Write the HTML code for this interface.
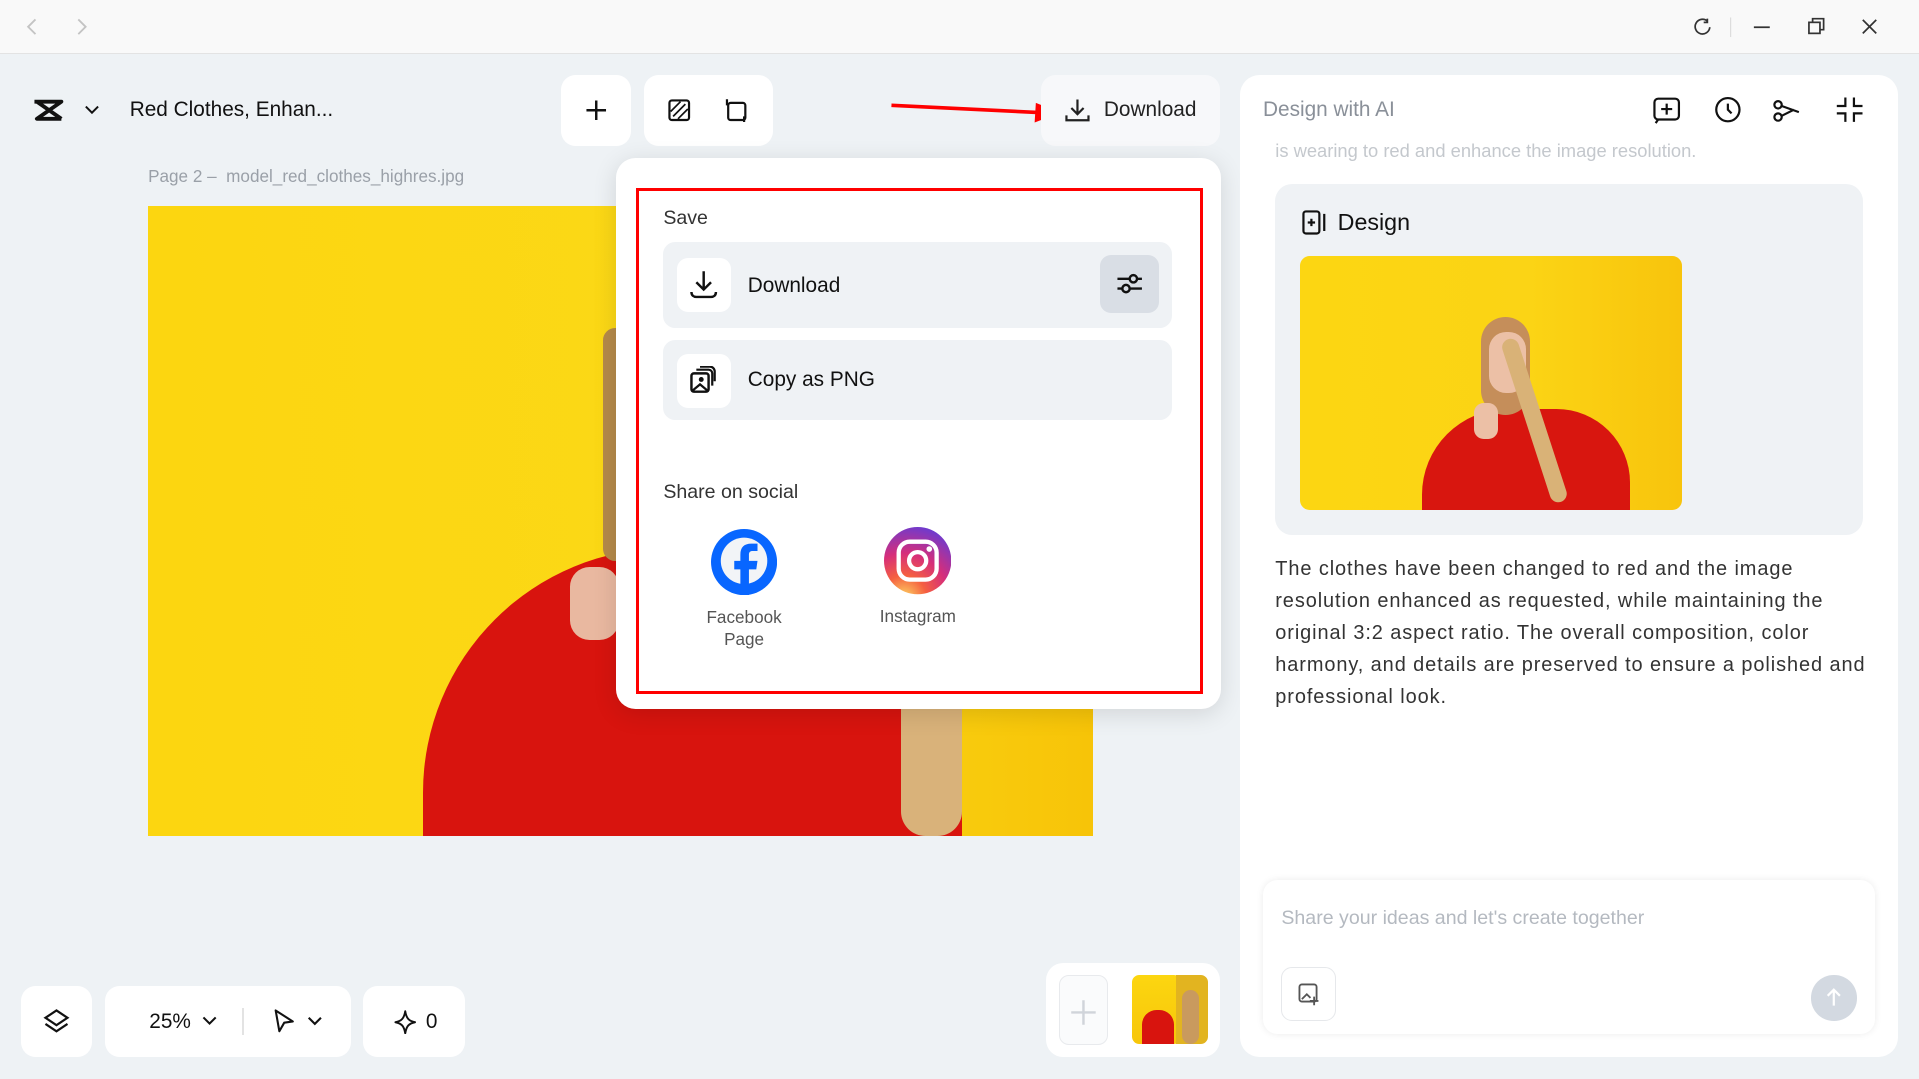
<!DOCTYPE html>
<html><head><meta charset="utf-8"><style>
*{box-sizing:border-box;margin:0;padding:0}
html,body{width:1919px;height:1079px;overflow:hidden;background:#eef2f5;font-family:"Liberation Sans",sans-serif}
#w{position:absolute;left:0;top:0;width:1568px;height:882px;zoom:1.22385;background:#eef2f5}
.a{position:absolute}
.card{position:absolute;background:#fff;border-radius:12px}
svg{display:block}
</style></head><body><div id="w">
<div class="a" style="left:0;top:0;width:1568px;height:44px;background:#f9f9f9;border-bottom:1px solid #e3e3e3"></div>
<svg class="a" style="left:18px;top:14px" width="60" height="16"><path d="M11 2L5 8l6 6M46 2l6 6-6 6" stroke="#c4c4c4" stroke-width="1.5" fill="none"/></svg>
<svg class="a" style="left:1380px;top:12px" width="160" height="20"><path d="M15 5a6 6 0 1 0 2 5M15 3v3h-3" stroke="#333" stroke-width="1.4" fill="none"/><path d="M34 2v16" stroke="#ddd"/><path d="M53 10h13" stroke="#333" stroke-width="1.4"/><rect x="98" y="6" width="9" height="9" stroke="#333" stroke-width="1.4" fill="none"/><path d="M101 6V3h9v9h-3" stroke="#333" stroke-width="1.4" fill="none"/><path d="M142 4l11 11M153 4l-11 11" stroke="#333" stroke-width="1.4"/></svg>

<div class="card" style="left:12px;top:62px;width:276px;height:58px;background:#eef2f5"></div>
<svg class="a" style="left:26px;top:80px" width="64" height="20"><path d="M2 3h22L4 17h20M4 3l20 14" stroke="#111" stroke-width="3.2" fill="none" stroke-linejoin="round"/><path d="M44 7l5 5 5-5" stroke="#111" stroke-width="1.6" fill="none"/></svg>
<div class="a" style="left:106px;top:80px;font-size:17px;color:#111">Red Clothes, Enhan...</div>
<div class="card" style="left:458px;top:61px;width:58px;height:58px"></div>
<svg class="a" style="left:477px;top:80px" width="20" height="20"><path d="M10 2v16M2 10h16" stroke="#111" stroke-width="2"/></svg>
<div class="card" style="left:526px;top:61px;width:106px;height:58px"></div>
<svg class="a" style="left:545px;top:80px" width="70" height="20"><rect x="2" y="2" width="16" height="16" rx="2" stroke="#111" stroke-width="1.8" fill="none"/><path d="M5 15L15 5M9 17l8-8M3 11l8-8" stroke="#111" stroke-width="1.4"/><rect x="50" y="4" width="14" height="14" rx="2" stroke="#111" stroke-width="1.8" fill="none"/><path d="M49 1v5M63 15v5" stroke="#111" stroke-width="1.8"/></svg>
<svg class="a" style="left:726px;top:80px" width="145" height="22"><path d="M2 6L125 12" stroke="#f00" stroke-width="3"/><path d="M120 4l20 8-21 8z" fill="#f00"/></svg>
<div class="card" style="left:851px;top:61px;width:146px;height:58px;background:#f7f8fa"></div>
<svg class="a" style="left:869px;top:79px" width="22" height="22"><path d="M11 2v12M6 9l5 5 5-5M2 15v4h18v-4" stroke="#222" stroke-width="1.8" fill="none"/></svg>
<div class="a" style="left:902px;top:80px;font-size:17px;color:#222">Download</div>
<div class="a" style="left:121px;top:136px;font-size:14px;color:#9aa0a8">Page 2 –&nbsp; model_red_clothes_highres.jpg</div>

<div class="a" style="left:121px;top:168px;width:772px;height:515px;background:linear-gradient(90deg,#fcd610,#fbd817 60%,#f7c408);overflow:hidden">
 <div class="a" style="left:225px;top:280px;width:440px;height:280px;background:#d8140e;border-radius:200px 160px 0 0"></div>
 <div class="a" style="left:372px;top:100px;width:20px;height:190px;background:#b58a4a;border-radius:10px"></div>
 <div class="a" style="left:345px;top:295px;width:40px;height:60px;background:#e9b8a0;border-radius:16px"></div>
 <div class="a" style="left:615px;top:390px;width:50px;height:125px;background:#d9b27a;border-radius:20px"></div>
</div>

<div class="card" style="left:503px;top:129px;width:495px;height:450px;border-radius:16px;box-shadow:0 4px 20px rgba(0,0,0,.12)"></div>
<div class="a" style="left:520px;top:154px;width:463px;height:413px;border:3px solid #f00"></div>
<div class="a" style="left:542px;top:169px;font-size:16px;color:#333">Save</div>
<div class="a" style="left:542px;top:198px;width:416px;height:70px;background:#eff2f5;border-radius:10px"></div>
<div class="a" style="left:553px;top:211px;width:44px;height:44px;background:#fff;border-radius:9px"></div>
<svg class="a" style="left:563px;top:221px" width="24" height="24"><path d="M12 1v15M6 10l6 6 6-6M2 18c0 3 2 4 4 4h12c2 0 4-1 4-4" stroke="#111" stroke-width="2" fill="none"/></svg>
<div class="a" style="left:611px;top:224px;font-size:17px;color:#111">Download</div>
<div class="a" style="left:899px;top:208px;width:48px;height:48px;background:#d9dee5;border-radius:9px"></div>
<svg class="a" style="left:911px;top:220px" width="24" height="24"><path d="M2 8h20M2 16h20" stroke="#111" stroke-width="2"/><circle cx="15" cy="8" r="3" fill="#d9dee5" stroke="#111" stroke-width="2"/><circle cx="9" cy="16" r="3" fill="#d9dee5" stroke="#111" stroke-width="2"/></svg>
<div class="a" style="left:542px;top:278px;width:416px;height:65px;background:#eff2f5;border-radius:10px"></div>
<div class="a" style="left:553px;top:289px;width:44px;height:44px;background:#fff;border-radius:9px"></div>
<svg class="a" style="left:563px;top:299px" width="24" height="24"><rect x="2" y="6" width="14" height="15" rx="2" stroke="#111" stroke-width="2" fill="none"/><path d="M6 3h10a3 3 0 0 1 3 3v10M9 0.5h8a4 4 0 0 1 4 4v8" stroke="#111" stroke-width="1.8" fill="none"/><circle cx="10" cy="11" r="2" fill="#111"/><path d="M3 20l6-5 6 5" stroke="#111" stroke-width="1.8" fill="none"/></svg>
<div class="a" style="left:611px;top:301px;font-size:17px;color:#111">Copy as PNG</div>
<div class="a" style="left:542px;top:393px;font-size:16px;color:#333">Share on social</div>
<svg class="a" style="left:581px;top:432px" width="54" height="54"><circle cx="27" cy="27" r="27" fill="#0866ff"/><circle cx="27" cy="26" r="19" fill="#f2f4f7"/><path d="M24 54V33h-5v-7h5v-5c0-6 3-9 9-9h5v6h-4c-2 0-3 1-3 3v5h7l-1 7h-6v21z" fill="#0866ff"/></svg>
<div class="a" style="left:560px;top:495px;width:96px;text-align:center;font-size:14px;color:#555;line-height:18px">Facebook<br>Page</div>
<svg class="a" style="left:722px;top:431px" width="55" height="55"><defs><radialGradient id="ig" cx="0.3" cy="1.05" r="1.1"><stop offset="0" stop-color="#fdd663"/><stop offset=".3" stop-color="#f56040"/><stop offset=".6" stop-color="#d62e7a"/><stop offset="1" stop-color="#6a3bd1"/></radialGradient></defs><circle cx="27.5" cy="27.5" r="27.5" fill="url(#ig)"/><rect x="12" y="12" width="31" height="31" rx="9" stroke="#fff" stroke-width="3.5" fill="none"/><circle cx="27.5" cy="27.5" r="7" stroke="#fff" stroke-width="3.5" fill="none"/><circle cx="37" cy="18" r="2.3" fill="#fff"/></svg>
<div class="a" style="left:702px;top:495px;width:96px;text-align:center;font-size:14px;color:#555">Instagram</div>

<div class="card" style="left:1013px;top:61px;width:538px;height:803px;border-radius:16px"></div>
<div class="a" style="left:1032px;top:80px;font-size:17px;color:#8a9099">Design with AI</div>
<svg class="a" style="left:1350px;top:78px" width="175" height="24"><rect x="2" y="3" width="20" height="17" rx="3" stroke="#111" stroke-width="1.8" fill="none"/><path d="M12 7v9M7.5 11.5h9M5 20l-2 3" stroke="#111" stroke-width="1.8"/><circle cx="62" cy="12" r="9.5" stroke="#111" stroke-width="1.8" fill="none"/><path d="M62 7v5l3 3" stroke="#111" stroke-width="1.8" fill="none"/><circle cx="103" cy="8" r="3" stroke="#111" stroke-width="1.8" fill="none"/><circle cx="103" cy="18" r="3" stroke="#111" stroke-width="1.8" fill="none"/><path d="M106 9l14 5M106 17l10-5" stroke="#111" stroke-width="1.8"/><path d="M158 2v7h-7M165 2v7h7M158 22v-7h-7M165 22v-7h7" stroke="#111" stroke-width="1.8" fill="none"/></svg>
<div class="a" style="left:1042px;top:114px;font-size:15px;color:#c4c8cd">is wearing to red and enhance the image resolution.</div>
<div class="a" style="left:1042px;top:150px;width:480px;height:287px;background:#eff2f5;border-radius:14px"></div>
<svg class="a" style="left:1063px;top:171px" width="22" height="22"><rect x="2" y="2" width="13" height="18" rx="2" stroke="#111" stroke-width="1.8" fill="none"/><path d="M8.5 8v6M5.5 11h6M19 4v14" stroke="#111" stroke-width="1.8"/></svg>
<div class="a" style="left:1093px;top:171px;font-size:19px;color:#111">Design</div>
<div class="a" style="left:1062px;top:209px;width:312px;height:208px;border-radius:8px;background:linear-gradient(90deg,#fcd612,#fbd415 60%,#f8c40c);overflow:hidden">
 <div class="a" style="left:100px;top:125px;width:170px;height:100px;background:#d8160f;border-radius:70px 60px 0 0"></div>
 <div class="a" style="left:148px;top:50px;width:40px;height:80px;background:#c58e5a;border-radius:20px"></div>
 <div class="a" style="left:155px;top:62px;width:30px;height:50px;background:#ecc0a6;border-radius:14px"></div>
 <div class="a" style="left:185px;top:65px;width:14px;height:140px;background:#d9b277;border-radius:7px;transform:rotate(-18deg)"></div>
 <div class="a" style="left:142px;top:120px;width:20px;height:30px;background:#ecc0a6;border-radius:8px"></div>
</div>
<div class="a" style="left:1042px;top:453px;width:492px;font-size:16.3px;letter-spacing:0.75px;line-height:26px;color:#333">The clothes have been changed to red and the image resolution enhanced as requested, while maintaining the original 3:2 aspect ratio. The overall composition, color harmony, and details are preserved to ensure a polished and professional look.</div>
<div class="a" style="left:1032px;top:719px;width:500px;height:126px;background:#fff;border-radius:12px;box-shadow:0 0 6px rgba(0,0,0,.08)"></div>
<div class="a" style="left:1047px;top:741px;font-size:16px;color:#b4b9c0">Share your ideas and let's create together</div>
<div class="a" style="left:1047px;top:790px;width:45px;height:44px;border:1px solid #e6e8eb;border-radius:9px"></div>
<svg class="a" style="left:1060px;top:802px" width="20" height="20"><rect x="2" y="2" width="14" height="14" rx="2" stroke="#555" stroke-width="1.5" fill="none"/><path d="M4 14l4-4 3 3M14 12v7M10.5 15.5h7" stroke="#555" stroke-width="1.5" fill="none"/></svg>
<div class="a" style="left:1480px;top:797px;width:37px;height:37px;border-radius:50%;background:#d3d9e1"></div>
<svg class="a" style="left:1490px;top:806px" width="16" height="18"><path d="M8 16V3M3 8l5-5 5 5" stroke="#fff" stroke-width="1.8" fill="none"/></svg>

<div class="card" style="left:17px;top:806px;width:58px;height:58px"></div>
<svg class="a" style="left:35px;top:824px" width="22" height="22"><path d="M11 2l9 6-9 6-9-6z" stroke="#111" stroke-width="1.8" fill="none"/><path d="M2 13l9 6 9-6" stroke="#111" stroke-width="1.8" fill="none"/></svg>
<div class="card" style="left:86px;top:806px;width:201px;height:58px"></div>
<div class="a" style="left:122px;top:825px;font-size:17px;color:#111">25%</div>
<svg class="a" style="left:164px;top:829px" width="14" height="10"><path d="M2 2l5 5 5-5" stroke="#111" stroke-width="1.7" fill="none"/></svg>
<div class="a" style="left:198px;top:824px;width:1px;height:22px;background:#e3e3e3"></div>
<svg class="a" style="left:222px;top:824px" width="44" height="22"><path d="M3 2l14 9-7 1-4 7z" stroke="#111" stroke-width="1.7" fill="none" stroke-linejoin="round"/><path d="M30 8l5 5 5-5" stroke="#111" stroke-width="1.7" fill="none"/></svg>
<div class="card" style="left:297px;top:806px;width:83px;height:58px"></div>
<svg class="a" style="left:321px;top:825px" width="20" height="20"><path d="M10 1c1 6 3 8 8 9-5 1-7 3-8 9-1-6-3-8-8-9 5-1 7-3 8-9z" stroke="#111" stroke-width="1.6" fill="none" stroke-linejoin="round"/></svg>
<div class="a" style="left:348px;top:825px;font-size:17px;color:#111">0</div>

<div class="card" style="left:855px;top:787px;width:142px;height:77px;border-radius:14px"></div>
<div class="a" style="left:865px;top:797px;width:40px;height:57px;border:1px solid #e8eaed;border-radius:8px;background:#fafbfc"></div>
<svg class="a" style="left:874px;top:816px" width="22" height="22"><path d="M11 1v20M1 11h20" stroke="#d0d4da" stroke-width="2"/></svg>
<div class="a" style="left:925px;top:797px;width:40px;height:56px;border-radius:6px;background:linear-gradient(#fcd610,#f7c60a);overflow:hidden"><div class="a" style="left:8px;top:28px;width:26px;height:30px;background:#d8140e;border-radius:12px 12px 0 0"></div></div>
<div class="a" style="left:961px;top:797px;width:26px;height:56px;border-radius:0 6px 6px 0;background:#e2b420;overflow:hidden"><div class="a" style="left:5px;top:12px;width:14px;height:44px;background:#c99a5e;border-radius:7px"></div></div>
</div></body></html>
